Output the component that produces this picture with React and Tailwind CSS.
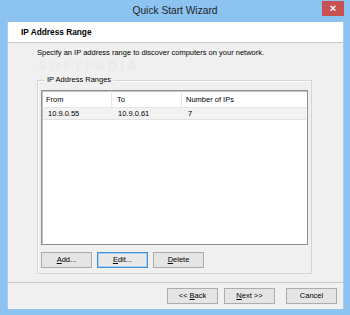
const font = { fontFamily: '"Liberation Sans", Arial, sans-serif' };

function WinButton({ children, focused, className = '' }) {
  return (
    <button
      className={`flex h-[16px] w-[51px] items-center justify-center border text-[7.5px] leading-none text-black ${
        focused ? 'border-[#3c8fd8] bg-[#e8e8e8] shadow-[inset_0_0_0_1px_#a8d1f5]' : 'border-[#acacac] bg-[#e5e5e5]'
      } ${className}`}
    >
      {children}
    </button>
  );
}

export default function App() {
  return (
    <div className="flex h-[315px] w-[350px] flex-col bg-[#8dc3f1]" style={font}>
      <div className="relative flex h-[22px] items-center justify-center">
        <span className="text-[10.2px] text-[#1e1e1e]">Quick Start Wizard</span>
        <div className="absolute right-[6px] top-[1px] flex h-[15px] w-[22px] items-center justify-center bg-[#c75050] text-[11px] font-bold leading-none text-white">
          ×
        </div>
      </div>

      <div className="mb-[6px] ml-[7px] mr-[6px] flex flex-1 flex-col border-l border-r border-[#a9cff0] bg-[#f0f0f0]">
        <div className="flex h-[21px] items-center border-b border-[#c8c8c8] bg-white pl-[13px]">
          <span className="text-[8.3px] font-bold text-black">IP Address Range</span>
        </div>

        <div className="relative flex flex-1 flex-col px-[29px]">
          <span className="pointer-events-none absolute left-[30px] top-[16px] text-[13px] font-bold leading-[13px] tracking-[3px] text-[#eaeaea]">
            SOFTPEDIA
          </span>
          <p className="relative mt-[5px] text-[7.5px] leading-[10px] text-black">
            Specify an IP address range to discover computers on your network.
          </p>

          <fieldset className="relative mr-[2px] mt-[17px] border border-[#d5d5d5] px-[3px] pb-[5px] pt-[5px] shadow-[inset_1px_1px_0_#fafafa]">
            <legend className="ml-[4px] px-[2px] text-[7.5px] leading-[10px] text-black">IP Address Ranges</legend>

            <div className="flex h-[155px] flex-col border border-[#8b8f96] bg-white shadow-[inset_1px_1px_0_#c4c4c4]">
              <div className="flex h-[17px] items-center border-b border-[#e5e5e5] text-[7.5px] text-black">
                <div className="h-full w-[70px] border-r border-[#e5e5e5] pl-[4px] leading-[17px]">From</div>
                <div className="h-full w-[70px] border-r border-[#e5e5e5] pl-[5px] leading-[17px]">To</div>
                <div className="h-full pl-[4px] leading-[17px]">Number of IPs</div>
              </div>
              <div className="mx-[1px] flex h-[12px] items-center border-b border-[#e2e2e2] bg-[#f2f2f2] text-[7.5px] text-black">
                <div className="w-[70px] pl-[5px]">10.9.0.55</div>
                <div className="w-[70px] pl-[5px]">10.9.0.61</div>
                <div className="pl-[5px]">7</div>
              </div>
            </div>

            <div className="mt-[7px] flex gap-[5px]">
              <WinButton>
                <span className="underline">A</span>dd...
              </WinButton>
              <WinButton focused>
                <span className="underline">E</span>dit...
              </WinButton>
              <WinButton>
                <span className="underline">D</span>elete
              </WinButton>
            </div>
          </fieldset>
        </div>

        <div className="flex h-[27px] items-start justify-end gap-[6px] border-t border-[#c8c8c8] pr-[6px] pt-[5px]">
          <WinButton>
            &lt;&lt; <span className="ml-[2px] underline">B</span>ack
          </WinButton>
          <WinButton>
            <span className="underline">N</span>ext &gt;&gt;
          </WinButton>
          <WinButton className="ml-[5px]">Cancel</WinButton>
        </div>
      </div>
    </div>
  );
}
